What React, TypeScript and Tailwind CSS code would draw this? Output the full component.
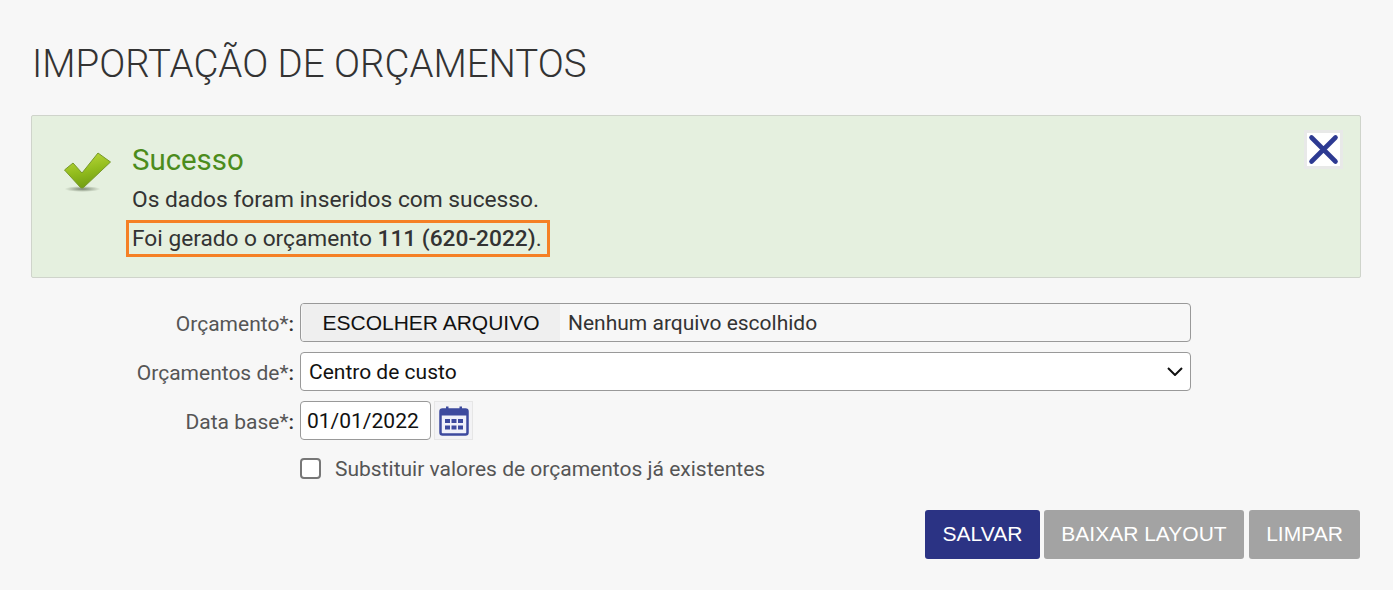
function SuccessCheck() {
  return (
    <svg width="50" height="42" viewBox="0 0 50 42" className="shrink-0">
      <defs>
        <linearGradient id="checkFill" x1="0.3" y1="0" x2="0.6" y2="1">
          <stop offset="0" stopColor="#bcd93c" />
          <stop offset="0.5" stopColor="#93bd1e" />
          <stop offset="1" stopColor="#6d9a10" />
        </linearGradient>
        <radialGradient id="checkShadow">
          <stop offset="0" stopColor="#5f6b55" stopOpacity="0.8" />
          <stop offset="1" stopColor="#5f6b55" stopOpacity="0" />
        </radialGradient>
      </defs>
      <ellipse cx="18.5" cy="37" rx="18" ry="3" fill="url(#checkShadow)" />
      <path
        d="M0.5 18 L9 11 L18 21 L34 1 L46.5 10 L19.5 35.5 Q18 36.5 16.5 35.5 Z"
        fill="url(#checkFill)"
        stroke="#77992a"
        strokeWidth="1"
        strokeLinejoin="round"
      />
    </svg>
  );
}

function CloseIcon() {
  return (
    <div className="-mt-[2px] flex h-[39px] w-[39px] items-center justify-center border-[3px] border-[#e8e9e8] bg-white">
      <svg width="33" height="33" viewBox="0 0 33 33" className="shrink-0 blur-[0.4px]">
        <path d="M4.5 4.5 L28.5 28.5 M28.5 4.5 L4.5 28.5" stroke="#2d3a92" strokeWidth="4.6" strokeLinecap="round" />
      </svg>
    </div>
  );
}

function CalendarIcon() {
  return (
    <div className="ml-[3px] flex h-[39px] w-[39px] items-center justify-center border border-[#e6e6e6] bg-[#f3f3f5]">
      <svg width="30" height="30" viewBox="0 0 30 30" className="blur-[0.4px]">
        <rect x="1.5" y="3.5" width="27" height="25" rx="2" fill="#f0f1fa" stroke="#3d4a9e" strokeWidth="2.5" />
        <rect x="1.5" y="3.5" width="27" height="6" rx="1" fill="#3d4a9e" />
        <rect x="7" y="0.5" width="2.5" height="5" fill="#3d4a9e" />
        <rect x="20.5" y="0.5" width="2.5" height="5" fill="#3d4a9e" />
        <g fill="#3d4a9e">
          <rect x="6" y="13" width="5" height="4" />
          <rect x="12.5" y="13" width="5" height="4" />
          <rect x="19" y="13" width="5" height="4" />
          <rect x="6" y="19.5" width="5" height="4" />
          <rect x="12.5" y="19.5" width="5" height="4" />
          <rect x="19" y="19.5" width="5" height="4" />
        </g>
      </svg>
    </div>
  );
}

function Row({ label, children }: { label: string; children: React.ReactNode }) {
  return (
    <div className="flex h-[39px] items-center">
      <label className="w-[294px] shrink-0 pt-[4px] text-right text-[21px] text-[#555]">
        {label}
        <span className="font-medium text-[#333]">:</span>
      </label>
      <div className="ml-[6px] flex items-center">{children}</div>
    </div>
  );
}

export default function App() {
  return (
    <div className="h-[590px] w-[1393px] overflow-hidden bg-[#f7f7f7] pl-[31px] pt-[38px] font-['Roboto',sans-serif] text-[#333]">
      <h1 className="ml-[1px] h-[77px] text-[38.45px] font-light leading-[51px] text-[#333]">
        IMPORTAÇÃO DE ORÇAMENTOS
      </h1>

      <div className="flex h-[163px] w-[1330px] items-start justify-between rounded-[2px] border border-[#cfd4cb] bg-[#e5f0df] pl-[32px] pr-[17px] pt-[16px]">
        <div className="flex">
          <div className="pt-[20px]">
            <SuccessCheck />
          </div>
          <div className="ml-[18px]">
            <h2 className="-mt-[1px] h-[54px] text-[29.4px] leading-[58px] text-[#4c8c1c]">Sucesso</h2>
            <p className="text-[22.75px] leading-[30px]">Os dados foram inseridos com sucesso.</p>
            <p className="-ml-[6px] mt-[5px] w-fit border-[3px] border-[#f58025] pl-[3px] pr-[5px] text-[22.7px] leading-[31px]">
              Foi gerado o orçamento <strong className="font-medium">111 (620-2022)</strong>.
            </p>
          </div>
        </div>
        <CloseIcon />
      </div>

      <div className="-ml-[31px] mt-[25px] flex flex-col gap-[10px]">
        <Row label="Orçamento*">
          <div className="flex h-[39px] w-[891px] items-center overflow-hidden rounded-[4px] border border-[#999] bg-[#f7f7f7] pl-[1px]">
            <div className="flex h-full w-[258px] items-center justify-center bg-[#efefef] font-['Liberation_Sans',sans-serif] text-[21px] text-[#111]">
              ESCOLHER ARQUIVO
            </div>
            <span className="ml-[8px] pt-[2px] text-[21px] text-[#333]">Nenhum arquivo escolhido</span>
          </div>
        </Row>
        <Row label="Orçamentos de*">
          <div className="flex h-[39px] w-[891px] items-center justify-between rounded-[4px] border border-[#999] bg-white pl-[8px] pr-[7px] text-[21px] text-[#111]">
            <span className="pt-[2px]">Centro de custo</span>
            <svg width="16" height="9" viewBox="0 0 16 9" className="shrink-0">
              <path d="M1 1 L8 8 L15 1" fill="none" stroke="#111" strokeWidth="2" />
            </svg>
          </div>
        </Row>
        <Row label="Data base*">
          <div className="flex h-[39px] w-[131px] items-center rounded-[4px] border border-[#999] bg-white pl-[6px] pt-[2px] text-[21px] text-[#111]">
            01/01/2022
          </div>
          <CalendarIcon />
        </Row>
        <div className="flex h-[37px] items-center pl-[300px]">
          <span className="h-[21px] w-[21px] rounded-[4px] border-2 border-[#777] bg-white" />
          <span className="ml-[14px] pt-[2px] text-[21px] text-[#555]">Substituir valores de orçamentos já existentes</span>
        </div>
      </div>

      <div className="mt-[23px] flex w-[1329px] justify-end gap-[4px] font-['Liberation_Sans',sans-serif] text-[21px] text-white">
        <button className="h-[49px] w-[115px] rounded-[3px] bg-[#2b3384] pb-[2px]">SALVAR</button>
        <button className="h-[49px] w-[200px] rounded-[3px] bg-[#a3a3a3] pb-[2px]">BAIXAR LAYOUT</button>
        <button className="ml-[1px] h-[49px] w-[111px] rounded-[3px] bg-[#a3a3a3] pb-[2px]">LIMPAR</button>
      </div>
    </div>
  );
}
